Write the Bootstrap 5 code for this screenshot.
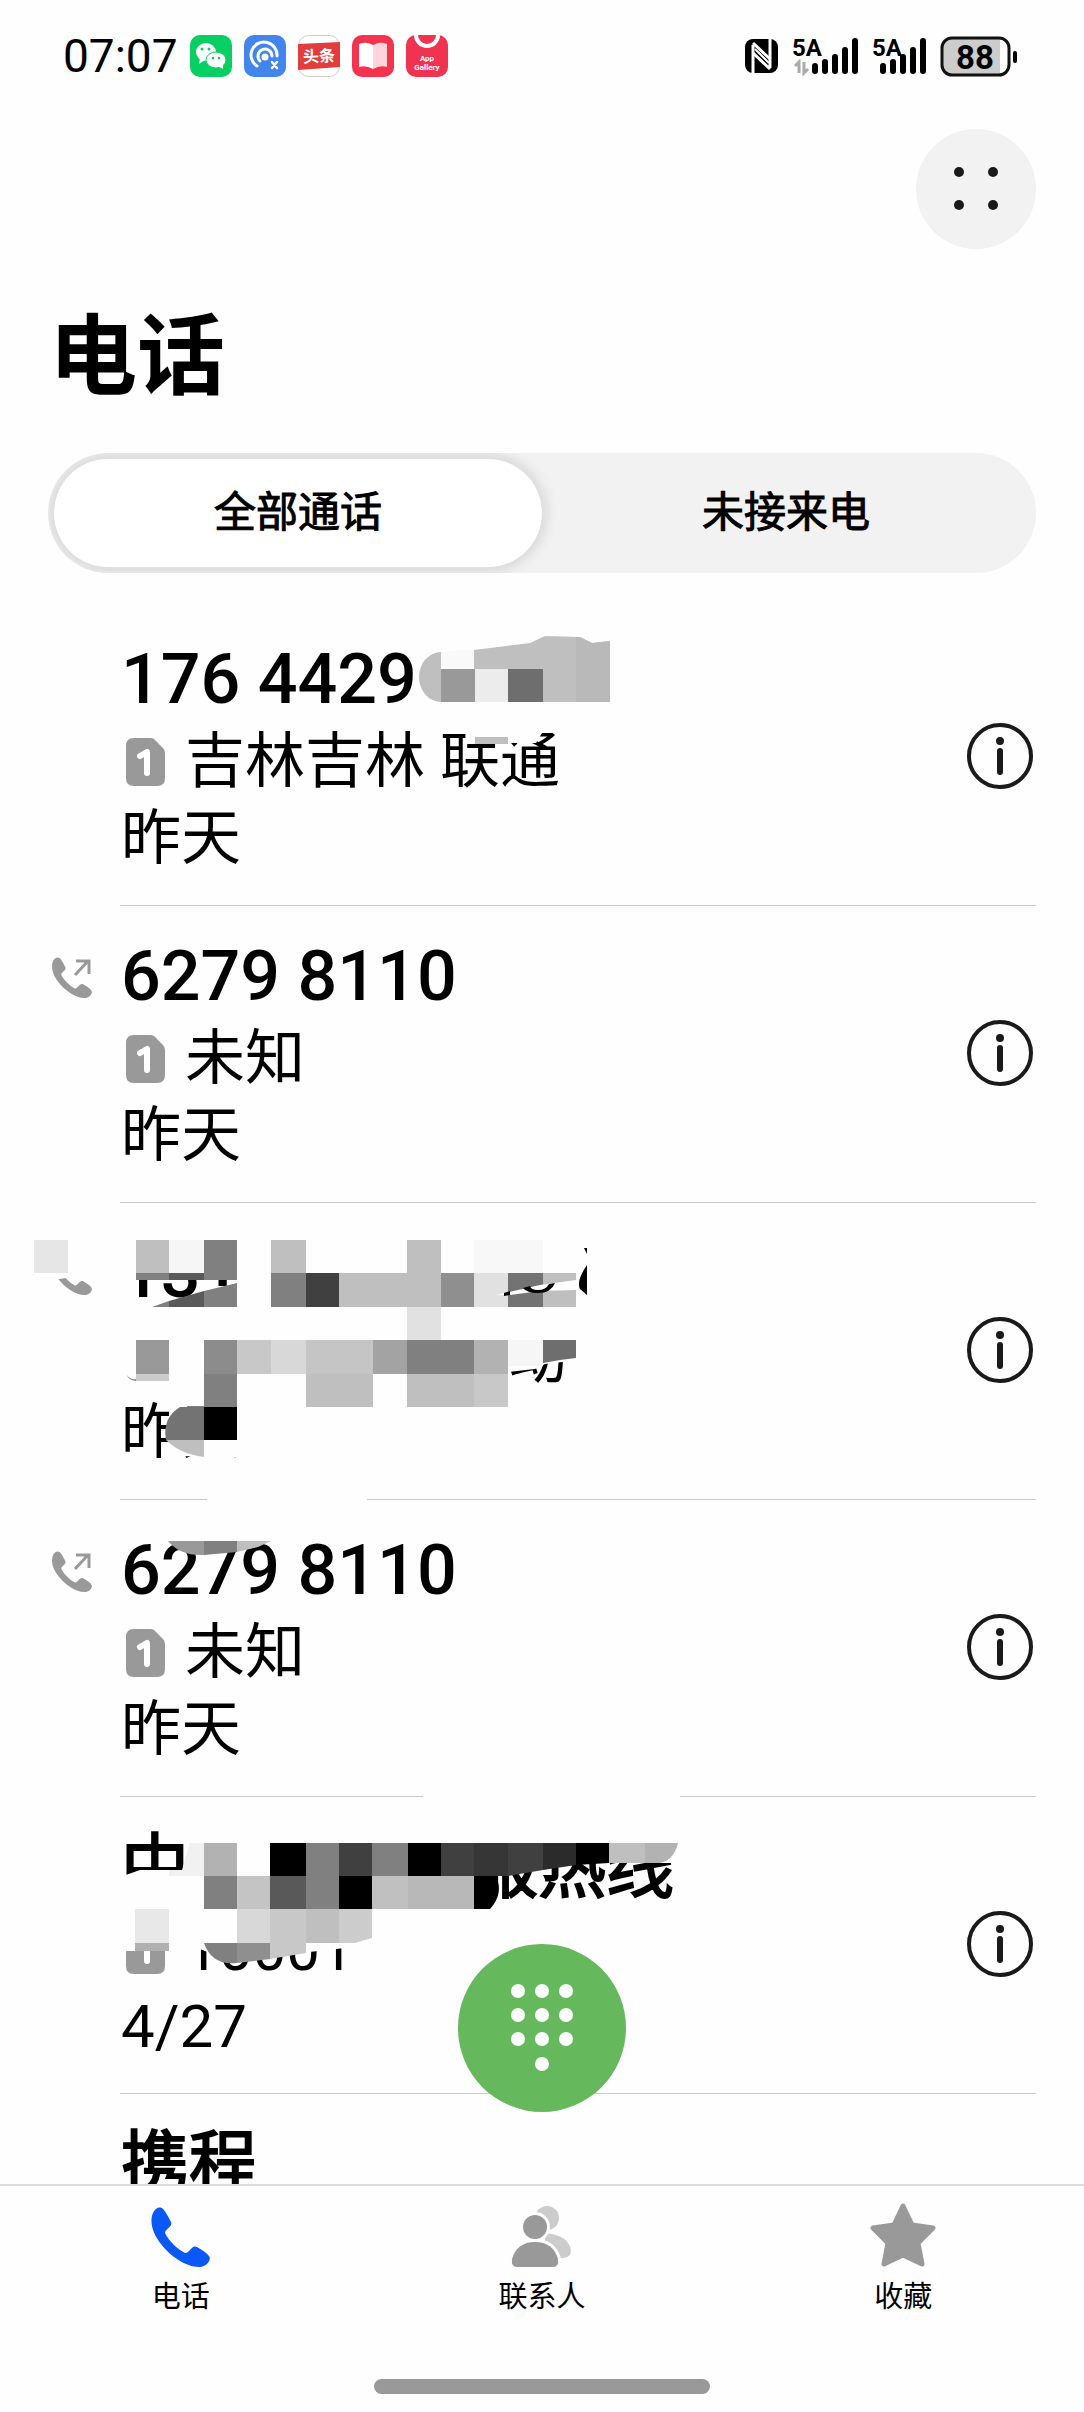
<!DOCTYPE html>
<html lang="zh-CN">
<head>
<meta charset="utf-8">
<meta name="viewport" content="width=device-width, initial-scale=1">
<title>电话</title>
<link href="https://cdn.jsdelivr.net/npm/bootstrap@5.3.0/dist/css/bootstrap.min.css" rel="stylesheet">
<style>
  body { background: #fefefe; color: #000; font-family: Roboto, "Noto Sans CJK SC", sans-serif; }
  svg { display: block; flex: none; }
  .phone-app { height: 100vh; }
  .status-bar { height: 112px; padding: 0 66px 0 63px; }
  .clock { font-size: 46px; line-height: 48px; margin-right: 12px; }
  .app-icons { gap: 12px; }
  .page-head { padding: 17px 48px 0; }
  .round-btn { width: 120px; height: 120px; background: #f2f2f2; border: 0; }
  .page-title { font-size: 88px; line-height: 88px; font-weight: 700; margin: 64px 0 52px 1px; }
  .segment { height: 120px; padding: 6px; background: #f2f2f2; overflow: hidden; }
  .segment button { border: 0; background: transparent; font-size: 42px; line-height: 60px; -webkit-text-stroke: 1px #000; }
  .segment button.active { background: #fff; box-shadow: 0 0 14px 4px rgba(0,0,0,.12); }
  .call-list { margin: 36px 0 0; min-height: 0; }
  .call-row { padding: 0 48px; }
  .call-kind { width: 72px; padding: 51px 0 0 3px; flex: none; }
  .call-body { border-bottom: 1px solid #cacaca; padding: 26px 3px 28px 1px; }
  .who { font-size: 70px; line-height: 88px; font-weight: 500; }
  .who.han { font-size: 68px; font-weight: 400; -webkit-text-stroke: 2px #000; }
  .where { font-size: 60px; line-height: 78px; height: 78px; gap: 20px; padding-left: 5px; }
  .when { font-size: 60px; line-height: 76px; }
  .info-btn { border: 0; background: none; padding: 0; }
  .mosaic { position: absolute; top: 0; left: 0; overflow: visible; pointer-events: none; }
  .mosaic text { font-family: "Noto Sans CJK SC", sans-serif; }
  .dial-btn { position: absolute; left: 50%; bottom: 300px; width: 168px; height: 168px; margin-left: -84px; background: #65b95c; border: 0; }
  .tab-bar { border-top: 2px solid #dcdcdc; height: 228px; }
  .tab-bar a { color: #000; font-size: 29px; line-height: 40px; padding-top: 15px; }
  .tab-bar svg { margin-bottom: 10px; }
  .home-bar { width: 336px; height: 15px; background: #999; margin-bottom: 18px; }
</style>
<script src="https://cdn.jsdelivr.net/npm/bootstrap@5.3.0/dist/js/bootstrap.bundle.min.js"></script>
</head>
<body>
<svg width="0" height="0" class="position-absolute" aria-hidden="true">
  <defs>
    <symbol id="handset" viewBox="0 0 60 60">
      <path d="M3 6C5 1 10-1 13 2C16 5 19 11 21 15C23 20 15 22 15 26C19 34 27 42 35 46C39 47 42 37 47 40C52 43 57 46 59 49C62 53 56 60 49 60C36 60 20 49 11 37C3 27-1 15 3 6Z"/>
    </symbol>
    <symbol id="outgoing" viewBox="0 0 42 42">
      <svg width="41" height="41" x="0" y="0" viewBox="0 0 60 60"><use href="#handset"/></svg>
      <path d="M24 18L37 4M25 4H38V17" fill="none" stroke="#999" stroke-width="3"/>
    </symbol>
    <symbol id="sim" viewBox="0 0 39 48">
      <path d="M8 0H25Q28 0 30 3L37 10Q39 12 39 15V40Q39 48 31 48H8Q0 48 0 40V8Q0 0 8 0Z" fill="#999"/>
      <path d="M14 18L21 14V35" fill="none" stroke="#fff" stroke-width="6" stroke-linecap="round" stroke-linejoin="round"/>
    </symbol>
    <symbol id="info" viewBox="0 0 66 66">
      <circle cx="33" cy="33" r="31" fill="none" stroke="#1a1a1a" stroke-width="4"/>
      <circle cx="33" cy="18" r="4" fill="#1a1a1a"/>
      <path d="M33 28V49" stroke="#1a1a1a" stroke-width="6" stroke-linecap="round"/>
    </symbol>
    <symbol id="bars" viewBox="0 0 46 36">
      <path d="M3 28V33M13 24V33M23 19V33M33 12V33M43 3V33" stroke="#000" stroke-width="6" stroke-linecap="round"/>
    </symbol>
  </defs>
</svg>

<div class="phone-app d-flex flex-column position-relative overflow-hidden">
  <header class="status-bar d-flex align-items-center justify-content-between flex-shrink-0">
    <div class="d-flex align-items-center">
      <span class="clock">07:07</span>
      <div class="app-icons d-flex">
        <svg width="42" height="42" viewBox="0 0 42 42"><rect width="42" height="42" rx="10" fill="#08cf64"/><ellipse cx="16" cy="17" rx="10" ry="9" fill="#fff"/><path d="M10 23L9 29L15 25Z" fill="#fff"/><ellipse cx="26" cy="25" rx="10" ry="8" fill="#fff" stroke="#08cf64" stroke-width="1"/><path d="M28 31L33 34L33 29Z" fill="#fff"/><g fill="#08cf64"><circle cx="12" cy="14" r="1.5"/><circle cx="19" cy="14" r="1.5"/><circle cx="23" cy="23" r="1.3"/><circle cx="29" cy="23" r="1.3"/></g></svg>
        <svg width="42" height="42" viewBox="0 0 42 42"><rect width="42" height="42" rx="10" fill="#4285ec"/><g fill="none" stroke="#fff" stroke-width="3" stroke-linecap="round"><path d="M13 31A13 13 0 1 1 33 21"/><path d="M16 26A7 7 0 1 1 28 21"/><path d="M28 27L33 33M33 27L28 33" stroke-width="2.5"/></g><circle cx="21" cy="22" r="3.5" fill="#fff"/></svg>
        <svg width="42" height="42" viewBox="0 0 42 42"><rect x=".5" y=".5" width="41" height="41" rx="10" fill="#fff" stroke="#d8c8c8"/><path d="M0 9L42 7V32L0 35Z" fill="#e23d3d"/><text x="5" y="27" font-size="16" font-weight="700" fill="#fff" font-family="Noto Sans CJK SC" transform="rotate(-3 21 21)">头条</text></svg>
        <svg width="42" height="42" viewBox="0 0 42 42"><rect width="42" height="42" rx="10" fill="#f5334f"/><path d="M7 9Q14 6 21 10V34Q14 30 7 32Z" fill="#fff"/><path d="M21 10Q28 6 35 9V32Q28 30 21 34Z" fill="#fdd5da"/></svg>
        <svg width="42" height="42" viewBox="0 0 42 42"><rect width="42" height="42" rx="10" fill="#f03350"/><path d="M10 0A11 11 0 0 0 32 0" fill="none" stroke="#fff" stroke-width="4"/><g fill="#fff" font-family="Roboto" font-size="8" font-weight="700" text-anchor="middle"><text x="21" y="26">App</text><text x="21" y="35">Gallery</text></g></svg>
      </div>
    </div>
    <div class="d-flex align-items-center">
      <svg width="274" height="54" viewBox="743 29 274 54">
        <rect x="744" y="39" width="33" height="34" rx="8" fill="#000"/><g fill="none" stroke="#fff" stroke-width="3"><path d="M752 73V45M752 43L769 59"/><path d="M769 39V68M769 69L752 53"/><path d="M754 49L768 63" stroke-width="2"/></g>
        <g font-family="Roboto" font-weight="700" font-size="24"><text x="791" y="56">5A</text><text x="871" y="56">5A</text></g>
        <path d="M794 66L798 62V73M803 62V73L807 69" stroke="#aaa" stroke-width="3" fill="none"/>
        <use href="#bars" x="811" y="38" width="46" height="36"/><use href="#bars" x="879" y="38" width="46" height="36"/>
        <path d="M950 39H999V75H950Q941 75 941 66V48Q941 39 950 39Z" fill="#ccc"/>
        <rect x="941" y="38" width="67" height="37" rx="10" fill="none" stroke="#111" stroke-width="3"/><rect x="1012" y="51" width="4" height="12" rx="2"/>
        <text x="974" y="69" font-family="Roboto" font-weight="700" font-size="33" text-anchor="middle">88</text>
      </svg>
    </div>
  </header>

  <div class="page-head flex-shrink-0">
    <div class="d-flex justify-content-end">
      <button type="button" class="round-btn rounded-circle d-flex align-items-center justify-content-center p-0" aria-label="更多">
        <svg width="46" height="44" viewBox="0 0 46 44" fill="#1a1a1a"><circle cx="6" cy="5" r="5"/><circle cx="40" cy="5" r="5"/><circle cx="6" cy="38" r="5"/><circle cx="40" cy="38" r="5"/></svg>
      </button>
    </div>
    <h1 class="page-title">电话</h1>
    <div class="segment d-flex rounded-pill" role="group">
      <button type="button" class="active rounded-pill w-50">全部通话</button>
      <button type="button" class="rounded-pill w-50">未接来电</button>
    </div>
  </div>

  <ul class="call-list list-unstyled flex-grow-1 overflow-hidden">
    <li class="call-row d-flex position-relative">
      <div class="call-kind"></div>
      <div class="call-body flex-grow-1 d-flex align-items-center justify-content-between">
        <div><div class="who">176 4429</div>
          <div class="where d-flex align-items-center"><svg width="39" height="48"><use href="#sim"/></svg><span>吉林吉林 联通</span></div>
          <div class="when">昨天</div></div>
        <button type="button" class="info-btn" aria-label="详情"><svg width="66" height="66"><use href="#info"/></svg></button>
      </div>
      <svg class="mosaic" width="1084" height="297" viewBox="0 609 1084 297">
        <path d="M441 652A22 25 0 0 0 441 702Z" fill="#bfbfbf"/><path d="M441 652L474 649V669H441Z" fill="#f9f9f9"/>
        <path d="M474 650L530 643L545 636L580 637L592 643L610 641V702H474Z" fill="#bfbfbf"/><path d="M576 637L580 637L592 643L610 641V702H576Z" fill="#b9b9b9"/>
        <rect x="441" y="669" width="34" height="33" fill="#999"/><rect x="475" y="669" width="33" height="33" fill="#ececec"/><rect x="508" y="669" width="35" height="33" fill="#6e6e6e"/>
        <path d="M468 728H545L536 743H468Z" fill="#fefefe"/><rect x="475" y="737" width="33" height="7" fill="#bfbfbf"/>
      </svg>
    </li>
    <li class="call-row d-flex position-relative">
      <div class="call-kind"><svg width="42" height="42" fill="#999"><use href="#outgoing"/></svg></div>
      <div class="call-body flex-grow-1 d-flex align-items-center justify-content-between">
        <div><div class="who">6279 8110</div>
          <div class="where d-flex align-items-center"><svg width="39" height="48"><use href="#sim"/></svg><span>未知</span></div>
          <div class="when">昨天</div></div>
        <button type="button" class="info-btn" aria-label="详情"><svg width="66" height="66"><use href="#info"/></svg></button>
      </div>
    </li>
    <li class="call-row d-flex position-relative">
      <div class="call-kind"><svg width="42" height="42" fill="#999"><use href="#outgoing"/></svg></div>
      <div class="call-body flex-grow-1 d-flex align-items-center justify-content-between">
        <div><div class="who">131</div>
          <div class="where d-flex align-items-center"><svg width="39" height="48"><use href="#sim"/></svg></div>
          <div class="when">昨天</div></div>
        <button type="button" class="info-btn" aria-label="详情"><svg width="66" height="66"><use href="#info"/></svg></button>
      </div>
      <svg class="mosaic" width="1084" height="297" viewBox="0 1203 1084 297">
        <text x="507" y="1378" font-size="60">动</text>
        <g fill="#fefefe"><path d="M30 1235H100V1272L60 1279H30Z"/><rect x="118" y="1235" width="134" height="45"/><path d="M205 1286H240V1290L203 1298Z"/><path d="M118 1325H250V1382H130L118 1374Z"/><path d="M500 1320H580V1360L545 1364L535 1369L500 1373Z"/><path d="M169 1407H245V1458L180 1456L169 1440Z"/></g>
        <path d="M127 1375Q130 1380 136 1379V1381Q128 1380 127 1375Z" fill="#888"/>
        <g fill="#bfbfbf"><rect x="136" y="1240" width="33" height="33"/><rect x="271" y="1240" width="35" height="33"/><rect x="407" y="1240" width="34" height="33"/><rect x="339" y="1273" width="102" height="34"/><rect x="543" y="1273" width="33" height="34"/><rect x="306" y="1374" width="67" height="33"/><rect x="407" y="1374" width="67" height="33"/><path d="M166 1440H204V1457Q180 1454 166 1440Z"/></g>
        <g fill="#808080"><rect x="204" y="1240" width="33" height="40"/><rect x="136" y="1273" width="33" height="7"/><rect x="271" y="1273" width="35" height="34"/><path d="M204 1291L237 1283V1307H204Z"/><path d="M152 1307L169 1301V1307Z"/><rect x="407" y="1340" width="67" height="34"/><rect x="204" y="1374" width="33" height="33"/></g>
        <g fill="#595959"><rect x="169" y="1273" width="35" height="7"/><path d="M169 1301L204 1291V1307H169Z"/></g>
        <rect x="34" y="1240" width="34" height="33" fill="#e6e6e6"/><rect x="169" y="1240" width="35" height="33" fill="#f6f6f6"/><rect x="474" y="1240" width="69" height="33" fill="#f8f8f8"/>
        <rect x="306" y="1273" width="33" height="34" fill="#404040"/><rect x="441" y="1273" width="33" height="34" fill="#8f8f8f"/><rect x="474" y="1273" width="34" height="34" fill="#e1e1e1"/><rect x="508" y="1273" width="35" height="34" fill="#737373"/>
        <path d="M496 1295L540 1285L576 1280V1290L540 1291L510 1295Z" fill="#fefefe"/><path d="M504 1293L510 1291V1295L504 1296ZM523 1288Q527 1293 538 1293Q551 1293 555 1283L549 1284Q546 1290 538 1290Q531 1290 530 1286Z"/>
        <path d="M587 1265Q576 1281 580 1289L587 1295ZM584 1248H587V1254Z"/>
        <rect x="407" y="1307" width="34" height="33" fill="#e1e1e1"/>
        <rect x="136" y="1340" width="33" height="34" fill="#999"/><rect x="204" y="1340" width="33" height="34" fill="#8c8c8c"/><rect x="237" y="1340" width="34" height="34" fill="#c8c8c8"/><rect x="271" y="1340" width="35" height="34" fill="#d8d8d8"/><rect x="306" y="1340" width="67" height="34" fill="#c5c5c5"/><rect x="373" y="1340" width="34" height="34" fill="#a3a3a3"/><rect x="474" y="1340" width="34" height="34" fill="#b2b2b2"/><rect x="508" y="1340" width="35" height="26" fill="#f6f6f6"/><path d="M543 1340H576V1358L560 1360L543 1363Z" fill="#6e6e6e"/>
        <rect x="136" y="1374" width="33" height="7" fill="#ccc"/><rect x="474" y="1374" width="34" height="33" fill="#c8c8c8"/>
        <path d="M180 1407H204V1440H166Q162 1418 180 1407Z" fill="#737373"/><rect x="204" y="1407" width="33" height="33"/>
        <rect x="207" y="1496" width="160" height="4" fill="#fefefe"/>
      </svg>
    </li>
    <li class="call-row d-flex position-relative">
      <div class="call-kind"><svg width="42" height="42" fill="#999"><use href="#outgoing"/></svg></div>
      <div class="call-body flex-grow-1 d-flex align-items-center justify-content-between">
        <div><div class="who">6279 8110</div>
          <div class="where d-flex align-items-center"><svg width="39" height="48"><use href="#sim"/></svg><span>未知</span></div>
          <div class="when">昨天</div></div>
        <button type="button" class="info-btn" aria-label="详情"><svg width="66" height="66"><use href="#info"/></svg></button>
      </div>
      <svg class="mosaic" width="1084" height="297" viewBox="0 1500 1084 297">
        <path d="M168 1541H204V1555Q180 1556 168 1541Z" fill="#999"/><path d="M204 1541H237V1552L204 1555Z" fill="#808080"/><path d="M237 1541H271L258 1547L237 1552Z" fill="#bfbfbf"/>
        <rect x="423" y="1793" width="257" height="4" fill="#fefefe"/>
      </svg>
    </li>
    <li class="call-row d-flex position-relative">
      <div class="call-kind"></div>
      <div class="call-body flex-grow-1 d-flex align-items-center justify-content-between">
        <div><div class="who han">中</div>
          <div class="where d-flex align-items-center"><svg width="39" height="48"><use href="#sim"/></svg><span>10001</span></div>
          <div class="when">4/27</div></div>
        <button type="button" class="info-btn" aria-label="详情"><svg width="66" height="66"><use href="#info"/></svg></button>
      </div>
      <svg class="mosaic" width="1084" height="297" viewBox="0 1797 1084 297">
        <text x="470" y="1892" font-size="68" stroke="#000" stroke-width="2">服热线</text>
        <g fill="#fefefe"><path d="M120 1877L140 1870H200V1905H120Z"/><rect x="460" y="1825" width="230" height="38"/><path d="M120 1920H172V1951H120ZM190 1915H372V1945L300 1953L270 1958L215 1955L200 1949H190Z"/></g>
        <path d="M190 1843H204V1876H169V1870H182Z" fill="#f1f1f1"/><rect x="204" y="1843" width="33" height="33" fill="#b2b2b2"/><rect x="237" y="1843" width="33" height="33" fill="#fefefe"/><rect x="270" y="1843" width="36" height="33"/><rect x="306" y="1843" width="33" height="33" fill="#808080"/><rect x="339" y="1843" width="33" height="33" fill="#404040"/><rect x="372" y="1843" width="36" height="33" fill="#808080"/><rect x="408" y="1843" width="33" height="33"/><rect x="441" y="1843" width="33" height="33" fill="#404040"/><rect x="474" y="1843" width="34" height="33" fill="#363636"/>
        <path d="M508 1843H543V1870L508 1876Z" fill="#404040"/><path d="M543 1843H576V1865L543 1870Z" fill="#2b2b2b"/><path d="M576 1843H609V1863L576 1865Z"/><path d="M609 1843H645V1863H609Z" fill="#bfbfbf"/><path d="M645 1843H678Q674 1860 660 1863H645Z" fill="#b2b2b2"/>
        <rect x="204" y="1876" width="33" height="33" fill="#808080"/><rect x="237" y="1876" width="33" height="33" fill="#c4c4c4"/><rect x="270" y="1876" width="36" height="33" fill="#595959"/><rect x="306" y="1876" width="33" height="33" fill="#808080"/><rect x="339" y="1876" width="33" height="33"/><rect x="372" y="1876" width="36" height="33" fill="#c0c0c0"/><rect x="408" y="1876" width="66" height="33" fill="#b8b8b8"/><path d="M474 1876H496Q504 1894 490 1909H474Z"/>
        <rect x="135" y="1909" width="34" height="34" fill="#e8e8e8"/><rect x="237" y="1909" width="33" height="34" fill="#d8d8d8"/><rect x="270" y="1909" width="36" height="34" fill="#c8c8c8"/><rect x="306" y="1909" width="33" height="34" fill="#bfbfbf"/><path d="M339 1909H372V1938L355 1943H339Z" fill="#ccc"/>
        <rect x="135" y="1943" width="34" height="8" fill="#b0b0b0"/><path d="M204 1943H237V1963Q212 1966 204 1943Z" fill="#808080"/><path d="M237 1943H270V1959L237 1963Z" fill="#8f8f8f"/><path d="M270 1943H306V1953L270 1959Z" fill="#c8c8c8"/>
      </svg>
    </li>
    <li class="call-row d-flex position-relative">
      <div class="call-kind"></div>
      <div class="call-body flex-grow-1"><div class="who han">携程</div></div>
    </li>
  </ul>

  <footer class="tab-bar d-flex flex-column justify-content-between flex-shrink-0">
    <nav class="d-flex text-center" aria-label="主导航">
      <a href="#" class="col-4 text-decoration-none d-flex flex-column align-items-center" aria-current="page">
        <svg width="66" height="66" viewBox="0 0 66 66" fill="#0a59f7"><use href="#handset" x="2" y="6" width="60" height="60"/></svg>电话</a>
      <a href="#" class="col-4 text-decoration-none d-flex flex-column align-items-center">
        <svg width="66" height="66" viewBox="0 0 66 66"><g fill="#ccc"><circle cx="38" cy="17" r="12"/><path d="M36 32Q60 34 62 50Q62 56 54 57H36Z"/></g><g fill="#999" stroke="#fefefe" stroke-width="6" paint-order="stroke"><circle cx="26" cy="26" r="12"/><path d="M26 41Q44 41 49 58Q50 66 44 66H8Q2 66 3 58Q8 41 26 41Z"/></g></svg>联系人</a>
      <a href="#" class="col-4 text-decoration-none d-flex flex-column align-items-center">
        <svg width="66" height="66" viewBox="0 0 66 66"><path d="M33 5L42 24L63 27L48 42L52 63L33 54L14 63L18 42L3 27L24 24Z" fill="#999" stroke="#999" stroke-width="5" stroke-linejoin="round"/></svg>收藏</a>
    </nav>
    <div class="home-bar rounded-pill mx-auto"></div>
  </footer>

  <button type="button" class="dial-btn rounded-circle d-flex align-items-center justify-content-center p-0" aria-label="拨号盘">
    <svg width="62" height="88" viewBox="0 0 62 88" fill="#fff"><circle cx="7" cy="7" r="7"/><circle cx="31" cy="7" r="7"/><circle cx="55" cy="7" r="7"/><circle cx="7" cy="31" r="7"/><circle cx="31" cy="31" r="7"/><circle cx="55" cy="31" r="7"/><circle cx="7" cy="55" r="7"/><circle cx="31" cy="55" r="7"/><circle cx="55" cy="55" r="7"/><circle cx="31" cy="80" r="7"/></svg>
  </button>
</div>
</body>
</html>
